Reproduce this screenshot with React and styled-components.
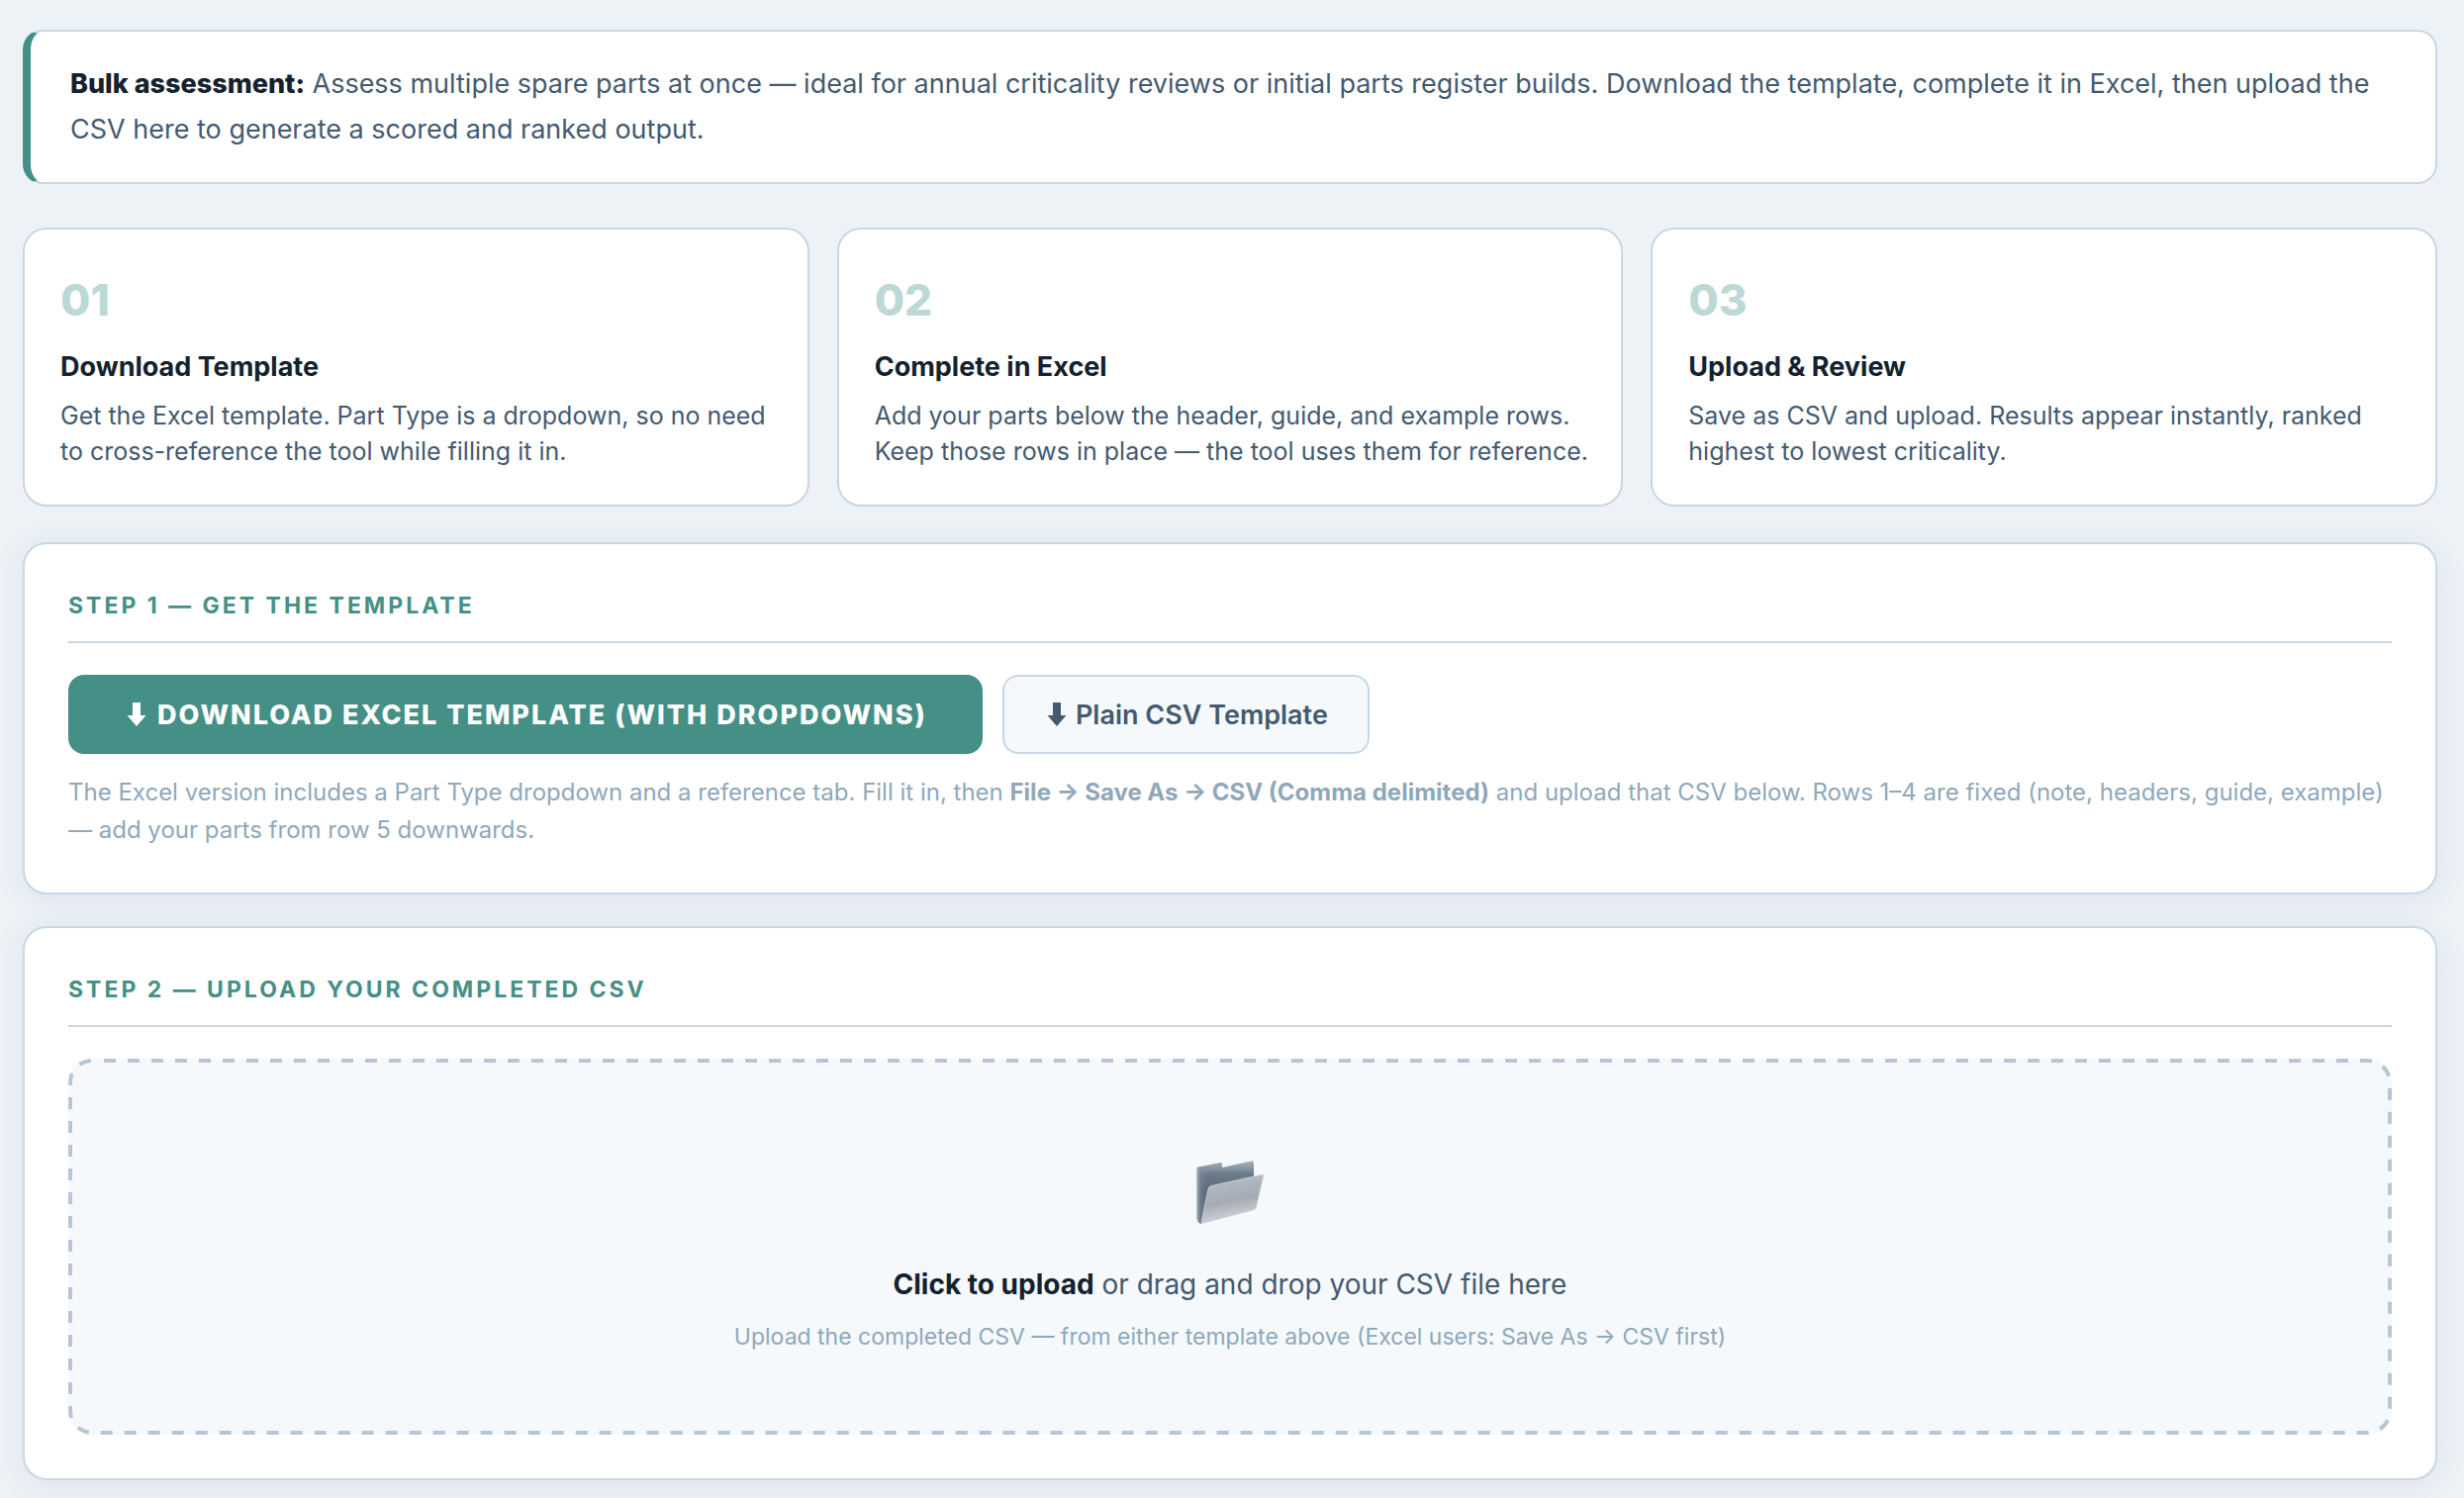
import React, { useState } from 'react'
import styled, { createGlobalStyle } from 'styled-components'

const guides = [
  {
    number: '01',
    title: 'Download Template',
    text: 'Get the Excel template. Part Type is a dropdown, so no need to cross-reference the tool while filling it in.',
  },
  {
    number: '02',
    title: 'Complete in Excel',
    text: 'Add your parts below the header, guide, and example rows. Keep those rows in place — the tool uses them for reference.',
  },
  {
    number: '03',
    title: 'Upload & Review',
    text: 'Save as CSV and upload. Results appear instantly, ranked highest to lowest criticality.',
  },
]

const DownArrow = () => (
  <ArrowSvg viewBox="0 0 26 24" aria-hidden="true">
    <path d="M9 0h8v13h5.500L13 24 3.500 13H9z" fill="currentColor" />
  </ArrowSvg>
)

const FolderIcon = () => (
  <FolderSvg viewBox="0 0 70 66" aria-hidden="true">
    <defs>
      <linearGradient id="folderBack" x1="0" y1="0" x2="0" y2="1">
        <stop offset="0" stopColor="#a9b4be" />
        <stop offset="0.22" stopColor="#6b7b89" />
        <stop offset="0.5" stopColor="#5b6c7b" />
        <stop offset="1" stopColor="#5f6e7b" />
      </linearGradient>
      <linearGradient id="folderEdge" x1="0" y1="0" x2="1" y2="0">
        <stop offset="0" stopColor="#c3ccd4" />
        <stop offset="0.16" stopColor="#8493a0" stopOpacity="0.4" />
        <stop offset="0.4" stopColor="#8493a0" stopOpacity="0" />
      </linearGradient>
      <linearGradient id="folderFront" x1="0.35" y1="0" x2="0.6" y2="1">
        <stop offset="0" stopColor="#bcc1c9" />
        <stop offset="0.3" stopColor="#adb3bc" />
        <stop offset="0.55" stopColor="#a6acb6" />
        <stop offset="0.82" stopColor="#c6cad1" />
        <stop offset="1" stopColor="#a4aab4" />
      </linearGradient>
    </defs>
    <path
      d="M1 10Q1 8 3 7.600L25 3Q27 2.600 27 4.600V8L57 1.200Q59 .800 59 2.800V50L6 64.500Q4 65 3 63L1.500 60Q1 59 1 57z"
      fill="url(#folderBack)"
    />
    <path d="M1 10Q1 8 3 7.600L25 3V60L6 64.500Q4 65 3 63L1.500 60Q1 59 1 57z" fill="url(#folderEdge)" />
    <path
      d="M16 26.500L67.500 15.200Q69 15 68.700 16.500L61.500 48Q61 50.500 58.500 51L7 64.200Q6 64.300 6.200 63L12.700 31Q13.500 27 16 26.500z"
      fill="url(#folderFront)"
      stroke="#cfd4da"
      strokeWidth="0.8"
    />
  </FolderSvg>
)

const App = () => {
  const [fileName, setFileName] = useState('')

  const onFileChange = (e) => {
    const file = e.target.files[0]
    setFileName(file ? file.name : '')
  }

  return (
    <Page>
      <GlobalStyle />
      <Banner>
        <strong>Bulk assessment:</strong> Assess multiple spare parts at once — ideal for annual criticality
        reviews or initial parts register builds. Download the template, complete it in Excel, then upload the
        CSV here to generate a scored and ranked output.
      </Banner>

      <GuideGrid>
        {guides.map((guide) => (
          <GuideCard key={guide.number}>
            <GuideNumber>{guide.number}</GuideNumber>
            <GuideTitle>{guide.title}</GuideTitle>
            <GuideText>{guide.text}</GuideText>
          </GuideCard>
        ))}
      </GuideGrid>

      <Panels>
        <Panel>
          <PanelTitle>Step 1 — Get the Template</PanelTitle>
          <ButtonRow>
            <PrimaryButton type="button">
              <DownArrow />
              Download Excel Template (with dropdowns)
            </PrimaryButton>
            <SecondaryButton type="button">
              <DownArrow />
              Plain CSV Template
            </SecondaryButton>
          </ButtonRow>
          <Note>
            The Excel version includes a Part Type dropdown and a reference tab. Fill it in, then{' '}
            <strong>File → Save As → CSV (Comma delimited)</strong> and upload that CSV below. Rows 1–4 are fixed
            (note, headers, guide, example) — add your parts from row 5 downwards.
          </Note>
        </Panel>

        <Panel>
          <PanelTitle>Step 2 — Upload Your Completed CSV</PanelTitle>
          <DropZone htmlFor="csv-file">
            <DashedOutline aria-hidden="true">
              <rect width="100%" height="100%" rx="22" />
            </DashedOutline>
            <FileInput id="csv-file" type="file" accept=".csv" onChange={onFileChange} />
            <FolderIcon />
            <DropText>
              {fileName || (
                <>
                  <strong>Click to upload</strong> or drag and drop your CSV file here
                </>
              )}
            </DropText>
            <DropHint>Upload the completed CSV — from either template above (Excel users: Save As → CSV first)</DropHint>
          </DropZone>
        </Panel>
      </Panels>
    </Page>
  )
}

const GlobalStyle = createGlobalStyle`
  * {
    box-sizing: border-box;
  }
  body {
    margin: 0;
    background: #edf2f7;
    color: #445a70;
    font-family: Inter, 'Liberation Sans', sans-serif;
    font-size: 27px;
    -webkit-font-smoothing: antialiased;
  }
  button {
    font-family: inherit;
    cursor: pointer;
  }
`

const Page = styled.main`
  padding: 30px 27px 18px 23px;
`

const Banner = styled.p`
  margin: 0 0 44px;
  padding: 30px 40px;
  background: #fff;
  border: 2px solid #c8d7e4;
  border-left: 8px solid #459086;
  border-radius: 20px;
  line-height: 46px;
  strong {
    color: #15222e;
    font-weight: 800;
  }
`

const GuideGrid = styled.section`
  display: grid;
  grid-template-columns: repeat(3, 1fr);
  gap: 28px;
  margin-bottom: 36px;
`

const GuideCard = styled.article`
  padding: 36px 28px 36px 36px;
  background: #fff;
  border: 2px solid #c8d7e4;
  border-radius: 24px;
`

const GuideNumber = styled.div`
  margin-bottom: 12px;
  color: #bdd9d5;
  font-size: 44px;
  font-weight: 800;
  line-height: 70px;
`

const GuideTitle = styled.h3`
  margin: 0 0 10px;
  color: #15222e;
  font-size: 27px;
  font-weight: 700;
  line-height: 42px;
`

const GuideText = styled.p`
  margin: 0;
  font-size: 25px;
  line-height: 36px;
`

const Panels = styled.div`
  display: flex;
  flex-direction: column;
  gap: 32px;
`

const Panel = styled.section`
  padding: 44px;
  background: #fff;
  border: 2px solid #c8d7e4;
  border-radius: 24px;
  box-shadow: 0 4px 32px rgba(26, 46, 66, 0.08);
`

const PanelTitle = styled.h2`
  margin: 0 0 32px;
  padding-bottom: 18px;
  border-bottom: 2px solid #c8d7e4;
  color: #459086;
  font-size: 23px;
  font-weight: 700;
  line-height: 36px;
  letter-spacing: 3px;
  text-transform: uppercase;
`

const ButtonRow = styled.div`
  display: flex;
  flex-wrap: wrap;
  gap: 20px;
`

const PrimaryButton = styled.button`
  display: flex;
  align-items: center;
  gap: 8px;
  height: 80px;
  padding: 0 56px;
  border: 0;
  border-radius: 16px;
  background: #459086;
  color: #fff;
  font-size: 27px;
  font-weight: 800;
  letter-spacing: 2px;
  text-transform: uppercase;
`

const SecondaryButton = styled.button`
  display: flex;
  align-items: center;
  gap: 6px;
  height: 80px;
  padding: 0 40px;
  border: 2px solid #c8d7e4;
  border-radius: 16px;
  background: #f5f9fc;
  color: #445a70;
  font-size: 27px;
  font-weight: 600;
`

const ArrowSvg = styled.svg`
  width: 26px;
  height: 24px;
`

const Note = styled.p`
  margin: 20px 0 0;
  color: #8fa8ba;
  font-size: 24px;
  line-height: 38px;
  strong {
    font-weight: 700;
  }
`

const DropZone = styled.label`
  position: relative;
  display: flex;
  flex-direction: column;
  align-items: center;
  padding: 102px 40px 80px;
  border-radius: 24px;
  background: #f5f9fc;
  text-align: center;
  cursor: pointer;
`

const DashedOutline = styled.svg`
  position: absolute;
  top: 2px;
  left: 2px;
  width: calc(100% - 4px);
  height: calc(100% - 4px);
  overflow: visible;
  rect {
    fill: none;
    stroke: #b5c6d6;
    stroke-width: 4px;
    stroke-dasharray: 12 12;
    stroke-dashoffset: 12px;
  }
`

const FileInput = styled.input`
  position: absolute;
  width: 1px;
  height: 1px;
  opacity: 0;
`

const FolderSvg = styled.svg`
  width: 70px;
  height: 66px;
  margin-bottom: 38px;
`

const DropText = styled.span`
  margin-bottom: 12px;
  font-size: 28px;
  line-height: 44px;
  strong {
    color: #15222e;
    font-weight: 700;
  }
`

const DropHint = styled.span`
  color: #8fa8ba;
  font-size: 23px;
  line-height: 38px;
`

export default App
